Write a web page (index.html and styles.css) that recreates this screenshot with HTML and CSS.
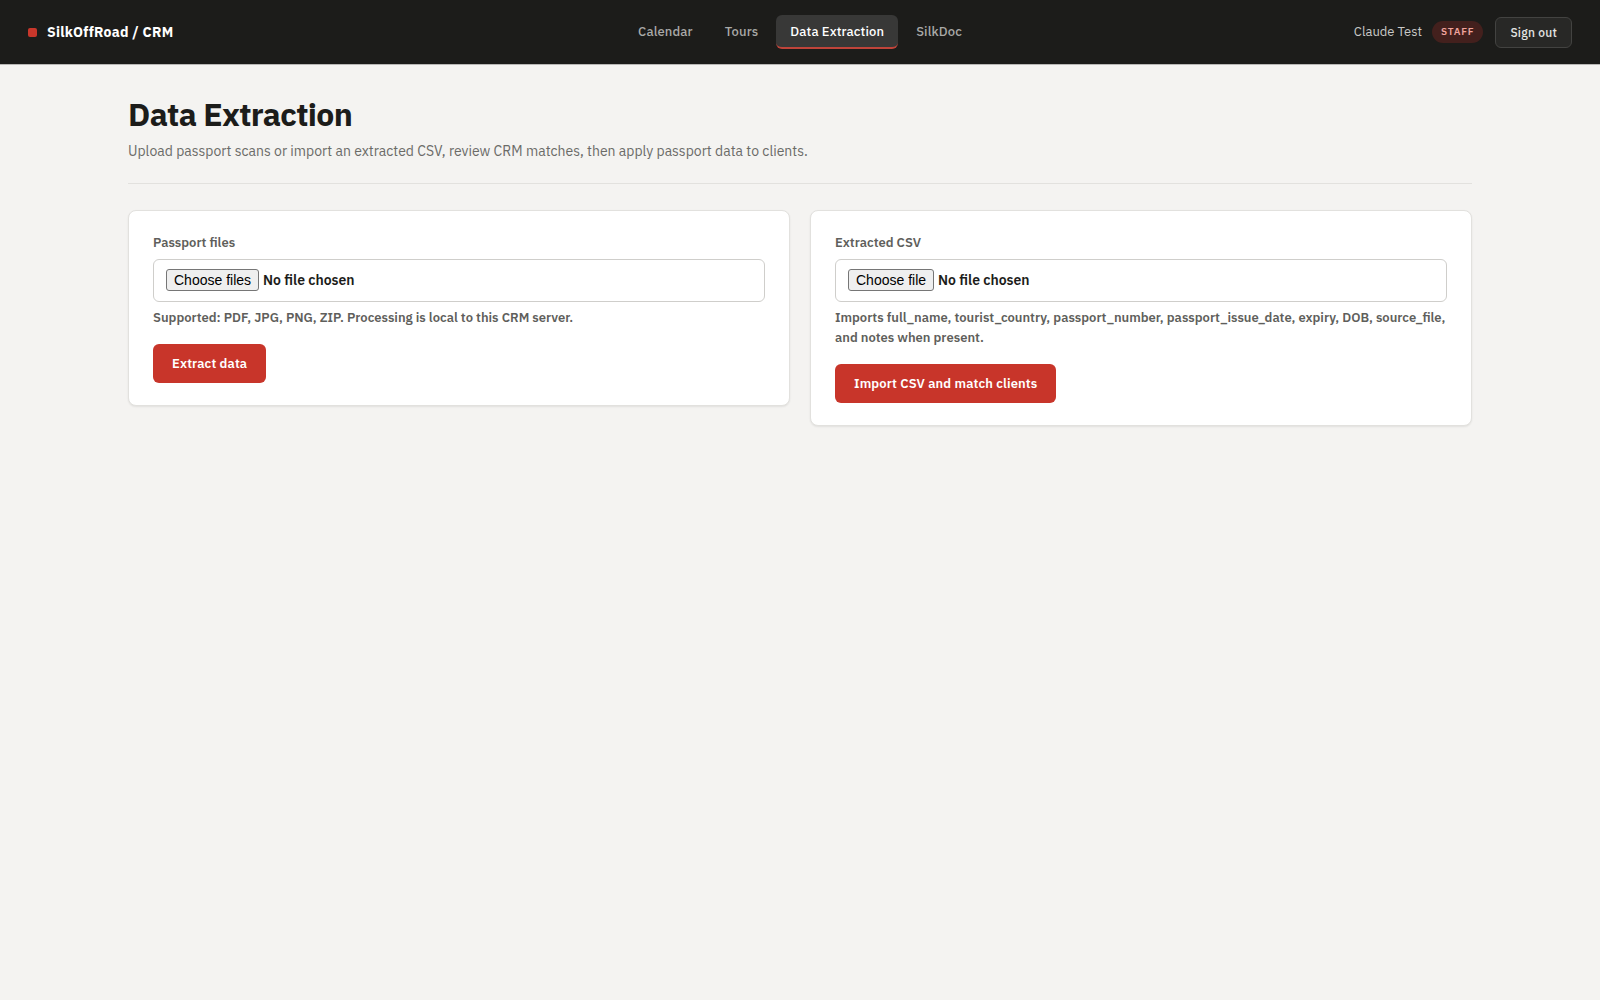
FILE: index.html
```html
<!DOCTYPE html>
<html lang="en">
<head>
    <meta charset="UTF-8">
    <meta name="viewport" content="width=device-width, initial-scale=1.0">
    <title>Data Extraction - SilkOffRoad / CRM</title>
    <link rel="stylesheet" href="styles.css">
</head>
<body>
    <header class="topbar">
        <a class="brand" href="#"><span class="brand-mark"></span>SilkOffRoad / CRM</a>

        <nav class="nav">
            <a href="#">Calendar</a>
            <a href="#">Tours</a>
            <a href="#" class="active">Data Extraction</a>
            <a href="#">SilkDoc</a>
        </nav>

        <div class="user">
            <span class="user-name">Claude Test</span>
            <span class="role">Staff</span>
            <button type="button" class="sign-out">Sign out</button>
        </div>
    </header>

    <main class="page">
        <div class="page-head">
            <h1>Data Extraction</h1>
            <p>Upload passport scans or import an extracted CSV, review CRM matches, then apply passport data to clients.</p>
        </div>

        <div class="cards">
            <form class="card">
                <label class="field-label" for="passportFiles">Passport files</label>
                <div class="file-field">
                    <span class="file-button">Choose files</span>
                    <span class="file-name">No file chosen</span>
                    <input type="file" id="passportFiles" accept=".pdf,.jpg,.jpeg,.png,.zip" multiple>
                </div>
                <p class="hint">Supported: PDF, JPG, PNG, ZIP. Processing is local to this CRM server.</p>
                <button type="submit" class="btn">Extract data</button>
            </form>

            <form class="card">
                <label class="field-label" for="csvFile">Extracted CSV</label>
                <div class="file-field">
                    <span class="file-button">Choose file</span>
                    <span class="file-name">No file chosen</span>
                    <input type="file" id="csvFile" accept=".csv">
                </div>
                <p class="hint">Imports full_name, tourist_country, passport_number, passport_issue_date, expiry, DOB, source_file, and notes when present.</p>
                <button type="submit" class="btn">Import CSV and match clients</button>
            </form>
        </div>
    </main>

    <script>
        document.querySelectorAll('.file-field input').forEach(input => {
            input.addEventListener('change', () => {
                const names = Array.from(input.files).map(file => file.name);
                input.parentElement.querySelector('.file-name').textContent = names.join(', ') || 'No file chosen';
            });
        });
    </script>
</body>
</html>
```
FILE: styles.css
```css
* {
    box-sizing: border-box;
}

body {
    margin: 0;
    font-family: "IBM Plex Sans", Roboto, sans-serif;
    font-size: 14px;
    line-height: 20px;
    background-color: #f4f3f1;
    color: #1c1c1a;
}

a {
    color: inherit;
    text-decoration: none;
}

.topbar {
    display: grid;
    grid-template-columns: 1fr auto 1fr;
    align-items: center;
    padding: 15px 28px;
    background-color: #1c1c1a;
    border-bottom: 1px solid #b8b7b5;
}

.brand {
    display: flex;
    align-items: center;
    gap: 10px;
    font-weight: 700;
    letter-spacing: 0.02em;
    color: #fff;
}

.brand-mark {
    width: 9px;
    height: 9px;
    border-radius: 2px;
    background-color: #c8372b;
}

.nav {
    display: flex;
    gap: 4px;
}

.nav a {
    padding: 7px 14px 5px;
    border-bottom: 2px solid transparent;
    border-radius: 6px;
    font-size: 13px;
    font-weight: 500;
    letter-spacing: 0.01em;
    color: #a9a9a7;
}

.nav a.active {
    background-color: #383837;
    border-bottom-color: #c0443a;
    color: #fff;
}

.user {
    display: flex;
    justify-content: flex-end;
    align-items: center;
}

.user-name {
    margin-right: 10px;
    font-size: 13px;
    color: #c9c9c7;
}

.role {
    margin-right: 12px;
    padding: 1px 9px;
    border-radius: 11px;
    background-color: #43201d;
    color: #f0a39c;
    font-size: 10px;
    font-weight: 600;
    letter-spacing: 0.08em;
    text-transform: uppercase;
}

.sign-out {
    padding: 5px 14px;
    border: 1px solid #434341;
    border-radius: 6px;
    background-color: #282826;
    color: #e4e4e2;
    font: 500 12px/19px "IBM Plex Sans", Roboto, sans-serif;
    letter-spacing: 0.02em;
    cursor: pointer;
}

.page {
    max-width: 1400px;
    margin: 0 auto;
    padding: 28px;
}

.page-head {
    padding-bottom: 22px;
    margin-bottom: 26px;
    border-bottom: 1px solid #e2e1de;
}

.page-head h1 {
    margin: 0 0 6px;
    font-size: 32px;
    line-height: 42px;
    font-weight: 700;
    letter-spacing: -0.02em;
}

.page-head p {
    margin: 0;
    color: #6b6b68;
}

.cards {
    display: grid;
    grid-template-columns: 1fr 1fr;
    align-items: start;
    gap: 20px;
}

.card {
    padding: 22px 24px;
    border: 1px solid #e2e1de;
    border-radius: 8px;
    background-color: #fff;
    box-shadow: 0 1px 2px rgba(0, 0, 0, 0.08);
}

.field-label,
.hint {
    display: block;
    font-size: 13px;
    font-weight: 600;
    color: #5f5f5c;
}

.file-field {
    position: relative;
    display: flex;
    align-items: center;
    gap: 4px;
    margin: 6px 0;
    padding: 9px 12px 10px;
    border: 1px solid #cfcecb;
    border-radius: 6px;
    background-color: #fff;
}

/* the real input covers the field */
.file-field input {
    position: absolute;
    inset: 0;
    width: 100%;
    opacity: 0;
    cursor: pointer;
}

.file-button {
    padding: 0 7px;
    border: 1px solid #767676;
    border-radius: 3px;
    background-color: #efefef;
    color: #000;
    font-family: "Liberation Sans", Arial, sans-serif;
    font-size: 14px;
}

.file-name {
    font-weight: 600;
}

.hint {
    margin: 0 0 16px;
}

.btn {
    padding: 10px 19px;
    border: none;
    border-radius: 6px;
    background-color: #c8352a;
    color: #fff;
    font: 600 13px/19px "IBM Plex Sans", Roboto, sans-serif;
    letter-spacing: 0.01em;
    cursor: pointer;
}
```
